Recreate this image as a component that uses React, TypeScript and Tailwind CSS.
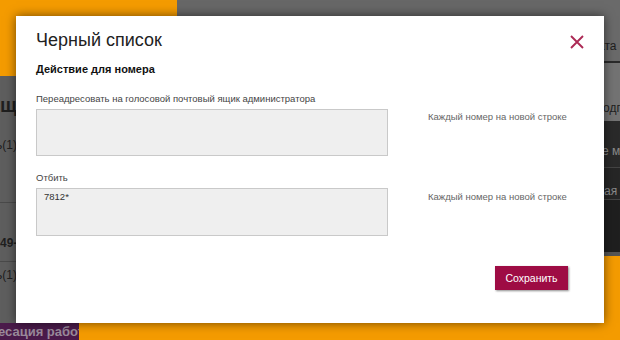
const font = { fontFamily: '"Liberation Sans", Arial, sans-serif' };

function Background() {
  return (
    <div className="flex h-[340px] w-[620px] flex-col overflow-hidden bg-[#666666]">
      <div className="flex h-[323px]">
        {/* left column */}
        <div className="flex w-[177px] flex-col">
          <div className="h-[76px] bg-[#f49b00]" />
          <div className="flex flex-1 flex-col bg-[#5e5e5e] text-[#1f1f1f]">
            <div className="mt-[17px] whitespace-nowrap text-[20px] font-bold leading-[24px]">щадь</div>
            <div className="ml-[-4px] mt-[21px] whitespace-nowrap text-[12px] leading-[14px]">ь(1)</div>
            <div className="mt-[50px] h-px bg-[#4a4a4a]" />
            <div className="mt-[33px] whitespace-nowrap text-[12px] font-bold leading-[14px]">49-11</div>
            <div className="mt-[11px] h-px bg-[#4a4a4a]" />
            <div className="ml-[-4px] mt-[6px] whitespace-nowrap text-[12px] leading-[14px]">ь(1)</div>
          </div>
        </div>
        {/* middle */}
        <div className="flex-1 bg-[#676767]" />
        {/* right column */}
        <div className="flex w-[40px] flex-col">
          <div className="h-[61px] bg-[#6a6a6a] pl-[18px] pt-[39px] text-[12px] leading-[14px] text-[#1f1f1f] whitespace-nowrap">ата</div>
          <div className="h-[2px] bg-[#2a2a2a]" />
          <div className="h-[58px] bg-[#737373] pl-[23px] pt-[38px] text-[12px] leading-[14px] text-[#1f1f1f] whitespace-nowrap">одп</div>
          <div className="h-[46px] bg-[#2a2a2a] pl-[22px] pt-[23px] text-[12px] leading-[14px] text-[#8a8a8a] whitespace-nowrap">е мо</div>
          <div className="h-px bg-[#444]" />
          <div className="h-[31px] bg-[#262626] pl-[24px] pt-[16px] text-[12px] leading-[14px] text-[#8a8a8a] whitespace-nowrap">ая с</div>
          <div className="h-px bg-[#444]" />
          <div className="h-[52px] bg-[#1f1f1f]" />
          <div className="h-[4px] bg-[#555]" />
          <div className="flex-1 bg-[#f49b00]" />
        </div>
      </div>
      <div className="flex h-[17px]">
        <div className="w-[79px] overflow-hidden bg-[#4b1b4b]">
          <div className="ml-[-2px] whitespace-nowrap text-[13px] font-bold leading-[17px] text-[#9a8a9a]">есация работ</div>
        </div>
        <div className="flex-1 bg-[#f49b00]" />
      </div>
    </div>
  );
}

function CloseIcon() {
  return (
    <svg width="14" height="14" viewBox="0 0 14 14" className="mt-[4px]">
      <path d="M1 1L13 13M13 1L1 13" stroke="#ac2a55" strokeWidth="1.9" fill="none" />
    </svg>
  );
}

export default function App() {
  return (
    <div className="relative h-[340px] w-[620px] overflow-hidden" style={font}>
      <Background />

      {/* Modal */}
      <div className="absolute left-[16px] top-[16px] flex h-[307px] w-[588px] flex-col bg-white px-[20px] pt-[12px] shadow-[0_0_10px_rgba(0,0,0,0.55)]">
        <div className="flex items-center justify-between">
          <h2 className="text-[18px] leading-[24px] text-[#222]">Черный список</h2>
          <CloseIcon />
        </div>

        <h3 className="mt-[10px] text-[11px] font-bold leading-[14px] text-[#111]">Действие для номера</h3>

        <div className="mt-[16px] grid grid-cols-[352px_1fr] gap-x-[40px]">
          <div className="flex flex-col">
            <label className="text-[9.5px] leading-[14px] text-[#444]">
              Переадресовать на голосовой почтовый ящик администратора
            </label>
            <textarea
              className="mt-[3px] h-[47px] w-[352px] resize-none border border-[#c9c9c9] bg-[#efefef] px-[7px] py-[3px] text-[9.5px] leading-[12px] text-[#333] outline-none"
              defaultValue=""
            />
          </div>
          <div className="pt-[18px] whitespace-nowrap text-[9.5px] leading-[14px] text-[#666]">Каждый номер на новой строке</div>
        </div>

        <div className="mt-[15px] grid grid-cols-[352px_1fr] gap-x-[40px]">
          <div className="flex flex-col">
            <label className="text-[9.5px] leading-[14px] text-[#444]">Отбить</label>
            <textarea
              className="mt-[3px] h-[48px] w-[352px] resize-none border border-[#c9c9c9] bg-[#efefef] px-[7px] py-[2px] text-[9.5px] leading-[12px] text-[#333] outline-none"
              defaultValue="7812*"
            />
          </div>
          <div className="pt-[19px] whitespace-nowrap text-[9.5px] leading-[14px] text-[#666]">Каждый номер на новой строке</div>
        </div>

        <div className="mt-[30px] flex justify-end pr-[16px]">
          <button className="h-[24px] w-[73px] bg-[#9e0c44] text-[10.5px] leading-[24px] text-white shadow-[1px_1px_2px_rgba(0,0,0,0.45)]">
            Сохранить
          </button>
        </div>
      </div>
    </div>
  );
}
